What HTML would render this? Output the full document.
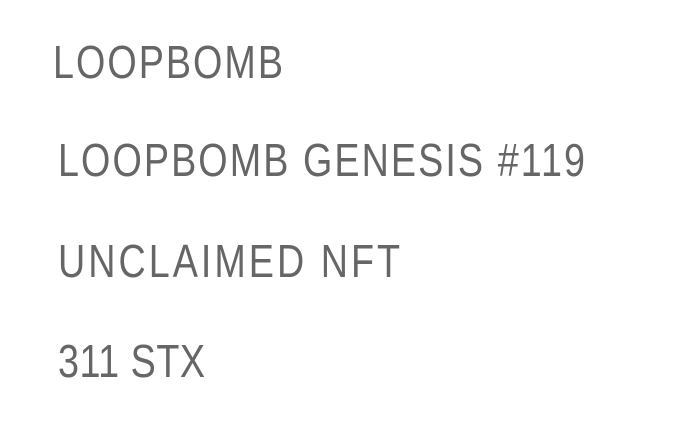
<!DOCTYPE html>
<html><head><meta charset="utf-8"><style>
html,body{margin:0;padding:0;background:#fff;width:676px;height:421px;overflow:hidden}
text{font-family:"Liberation Sans",sans-serif;font-size:46px;fill:#666}
</style></head><body>
<svg width="676" height="421" xmlns="http://www.w3.org/2000/svg">
<g transform="scale(0.82,1)">
<text x="64.63" y="78" textLength="280.5" lengthAdjust="spacing">LOOPBOMB</text>
<text x="70.73" y="176" textLength="642.7" lengthAdjust="spacing">LOOPBOMB GENESIS #119</text>
<text x="70.73" y="277" textLength="417.1" lengthAdjust="spacing">UNCLAIMED NFT</text>
<text x="70.73" y="377" textLength="179.3" lengthAdjust="spacing">311 STX</text>
</g>
</svg>
</body></html>
